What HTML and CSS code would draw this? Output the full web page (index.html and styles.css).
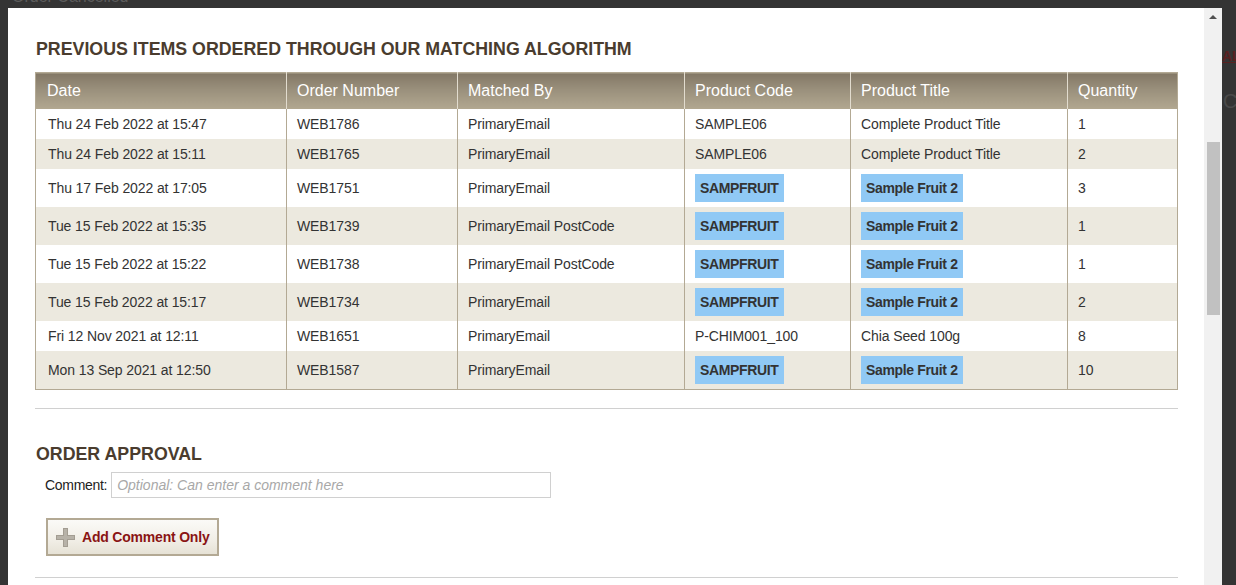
FILE: index.html
```html
<!DOCTYPE html>
<html>
<head>
<meta charset="utf-8">
<link rel="stylesheet" href="styles.css">
</head>
<body>
<div class="backdrop">
  <div class="bg-top">
    <span class="bg-t1">Order Cancelled</span>
  </div>
  <div class="bg-right">
    <span class="bg-all">ALL</span>
    <span class="bg-co">Co</span>
  </div>
</div>
<div class="modal">
  <div class="content">
    <h2 class="heading">PREVIOUS ITEMS ORDERED THROUGH OUR MATCHING ALGORITHM</h2>
    <table class="grid">
      <colgroup>
        <col class="c1"><col class="c2"><col class="c3"><col class="c4"><col class="c5"><col class="c6">
      </colgroup>
      <thead>
        <tr><th>Date</th><th>Order Number</th><th>Matched By</th><th>Product Code</th><th>Product Title</th><th>Quantity</th></tr>
      </thead>
      <tbody>
        <tr class="short"><td>Thu 24 Feb 2022 at 15:47</td><td>WEB1786</td><td>PrimaryEmail</td><td>SAMPLE06</td><td>Complete Product Title</td><td>1</td></tr>
        <tr class="short alt"><td>Thu 24 Feb 2022 at 15:11</td><td>WEB1765</td><td>PrimaryEmail</td><td>SAMPLE06</td><td>Complete Product Title</td><td>2</td></tr>
        <tr><td>Thu 17 Feb 2022 at 17:05</td><td>WEB1751</td><td>PrimaryEmail</td><td><span class="tag">SAMPFRUIT</span></td><td><span class="tag">Sample Fruit 2</span></td><td>3</td></tr>
        <tr class="alt"><td>Tue 15 Feb 2022 at 15:35</td><td>WEB1739</td><td>PrimaryEmail PostCode</td><td><span class="tag">SAMPFRUIT</span></td><td><span class="tag">Sample Fruit 2</span></td><td>1</td></tr>
        <tr><td>Tue 15 Feb 2022 at 15:22</td><td>WEB1738</td><td>PrimaryEmail PostCode</td><td><span class="tag">SAMPFRUIT</span></td><td><span class="tag">Sample Fruit 2</span></td><td>1</td></tr>
        <tr class="alt"><td>Tue 15 Feb 2022 at 15:17</td><td>WEB1734</td><td>PrimaryEmail</td><td><span class="tag">SAMPFRUIT</span></td><td><span class="tag">Sample Fruit 2</span></td><td>2</td></tr>
        <tr class="short"><td>Fri 12 Nov 2021 at 12:11</td><td>WEB1651</td><td>PrimaryEmail</td><td>P-CHIM001_100</td><td>Chia Seed 100g</td><td>8</td></tr>
        <tr class="alt"><td>Mon 13 Sep 2021 at 12:50</td><td>WEB1587</td><td>PrimaryEmail</td><td><span class="tag">SAMPFRUIT</span></td><td><span class="tag">Sample Fruit 2</span></td><td>10</td></tr>
      </tbody>
    </table>
    <hr class="rule">
    <h2 class="heading heading2">ORDER APPROVAL</h2>
    <div class="comment-row">
      <label class="comment-label" for="cmt">Comment:</label>
      <input id="cmt" class="comment-input" type="text" placeholder="Optional: Can enter a comment here">
    </div>
    <button class="btn" type="button">
      <svg class="plus" width="19" height="19" viewBox="0 0 19 19"><path d="M7 0h5v7h7v5h-7v7H7v-7H0V7h7z" fill="#a39d92"/><path d="M8 1h3v7h7v3h-7v7H8v-7H1V8h7z" fill="#b7b2a8"/></svg>
      <span>Add Comment Only</span>
    </button>
    <hr class="rule rule2">
  </div>
  <div class="scrollbar">
    <div class="arrow"></div>
    <div class="thumb"></div>
  </div>
</div>
</body>
</html>
```

FILE: styles.css
```css
html, body {
  margin: 0;
  padding: 0;
  height: 100%;
  overflow: hidden;
}
body {
  background: #343434;
  font-family: "Liberation Sans", Arial, sans-serif;
  position: relative;
}
.backdrop {
  position: absolute;
  inset: 0;
  z-index: 0;
}
.bg-top {
  position: absolute;
  left: 0;
  top: 0;
  width: 1236px;
  height: 8px;
  overflow: hidden;
}
.bg-t1 {
  position: absolute;
  left: 12px;
  top: -12px;
  font-size: 16px;
  color: #5c5c5c;
}
.bg-right {
  position: absolute;
  left: 1222px;
  top: 0;
  width: 14px;
  height: 585px;
  overflow: hidden;
}
.bg-all {
  position: absolute;
  left: 0;
  top: 48px;
  font-size: 14px;
  font-weight: bold;
  color: #5a2020;
  text-decoration: underline;
}
.bg-co {
  position: absolute;
  left: 1px;
  top: 90px;
  font-size: 20px;
  color: #4a4a4a;
}
.modal {
  position: relative;
  z-index: 1;
  margin: 8px 0 0 8px;
  width: 1214px;
  height: 577px;
  background: #fff;
  display: flex;
  overflow: hidden;
}
.content {
  flex: 1;
  padding: 30px 26px 0 27px;
  color: #333;
}
.heading {
  margin: 0 0 12px 1px;
  font-size: 17.8px;
  line-height: 22px;
  font-weight: bold;
  color: #4a3c2e;
}
.grid {
  width: 1142px;
  border-collapse: collapse;
  border: 1px solid #b3a994;
  table-layout: fixed;
}
.c1 { width: 251px; }
.c2 { width: 171px; }
.c3 { width: 227px; }
.c4 { width: 166px; }
.c5 { width: 217px; }
.c6 { width: 110px; }
.grid th {
  height: 36px;
  padding: 0 10px;
  text-align: left;
  font-weight: normal;
  font-size: 16px;
  color: #fff;
  background: linear-gradient(to bottom, #837866 0%, #9a907c 45%, #b2a891 100%);
  border-left: 1px solid #e2dccf;
}
.grid th:first-child { border-left: none; padding-left: 11px; }
.grid td {
  height: 38px;
  padding: 0 10px;
  font-size: 14px;
  color: #333;
  border-left: 1px solid #b3a994;
  vertical-align: middle;
  letter-spacing: -0.1px;
}
.grid td:first-child { border-left: none; padding-left: 12px; }
.grid tr.short td { height: 30px; }
.grid tr.alt td { background: #ece9df; }
.tag {
  display: inline-block;
  background: #90c9f5;
  font-weight: bold;
  padding: 6px 5px;
  line-height: 16px;
  letter-spacing: -0.35px;
}
.rule {
  margin: 18px 0 0 0;
  border: none;
  border-top: 1px solid #d0d0d0;
  height: 0;
}
.heading2 {
  margin: 34px 0 7px 1px;
}
.comment-row {
  display: flex;
  align-items: center;
  gap: 4px;
  padding-left: 10px;
}
.comment-label {
  font-size: 14px;
  color: #222;
  letter-spacing: -0.3px;
}
.comment-input {
  width: 440px;
  height: 26px;
  box-sizing: border-box;
  border: 1px solid #d0d0d0;
  padding: 0 5px;
  font-family: "Liberation Sans", Arial, sans-serif;
  font-size: 14px;
  outline: none;
}
.comment-input::placeholder {
  color: #a8a8a8;
  font-style: italic;
}
.btn {
  margin: 20px 0 0 11px;
  height: 38px;
  width: 173px;
  box-sizing: border-box;
  border: 2px solid #b3a994;
  background: linear-gradient(to bottom, #fbfaf7 0%, #f1eee6 60%, #e6e2d6 100%);
  display: flex;
  align-items: center;
  gap: 7px;
  padding: 0 0 0 8px;
  font-family: "Liberation Sans", Arial, sans-serif;
  font-size: 14px;
  font-weight: bold;
  color: #8a1414;
  letter-spacing: -0.2px;
  cursor: pointer;
}
.plus { flex: none; }
.rule2 {
  margin-top: 21px;
}
.scrollbar {
  width: 18px;
  flex: none;
  background: #f1f1f1;
  position: relative;
}
.arrow {
  margin: 7px auto 0;
  width: 0;
  height: 0;
  border-left: 4px solid transparent;
  border-right: 4px solid transparent;
  border-bottom: 4px solid #505050;
}
.thumb {
  margin: 123px auto 0 3px;
  width: 13px;
  height: 173px;
  background: #c1c1c1;
}
```
